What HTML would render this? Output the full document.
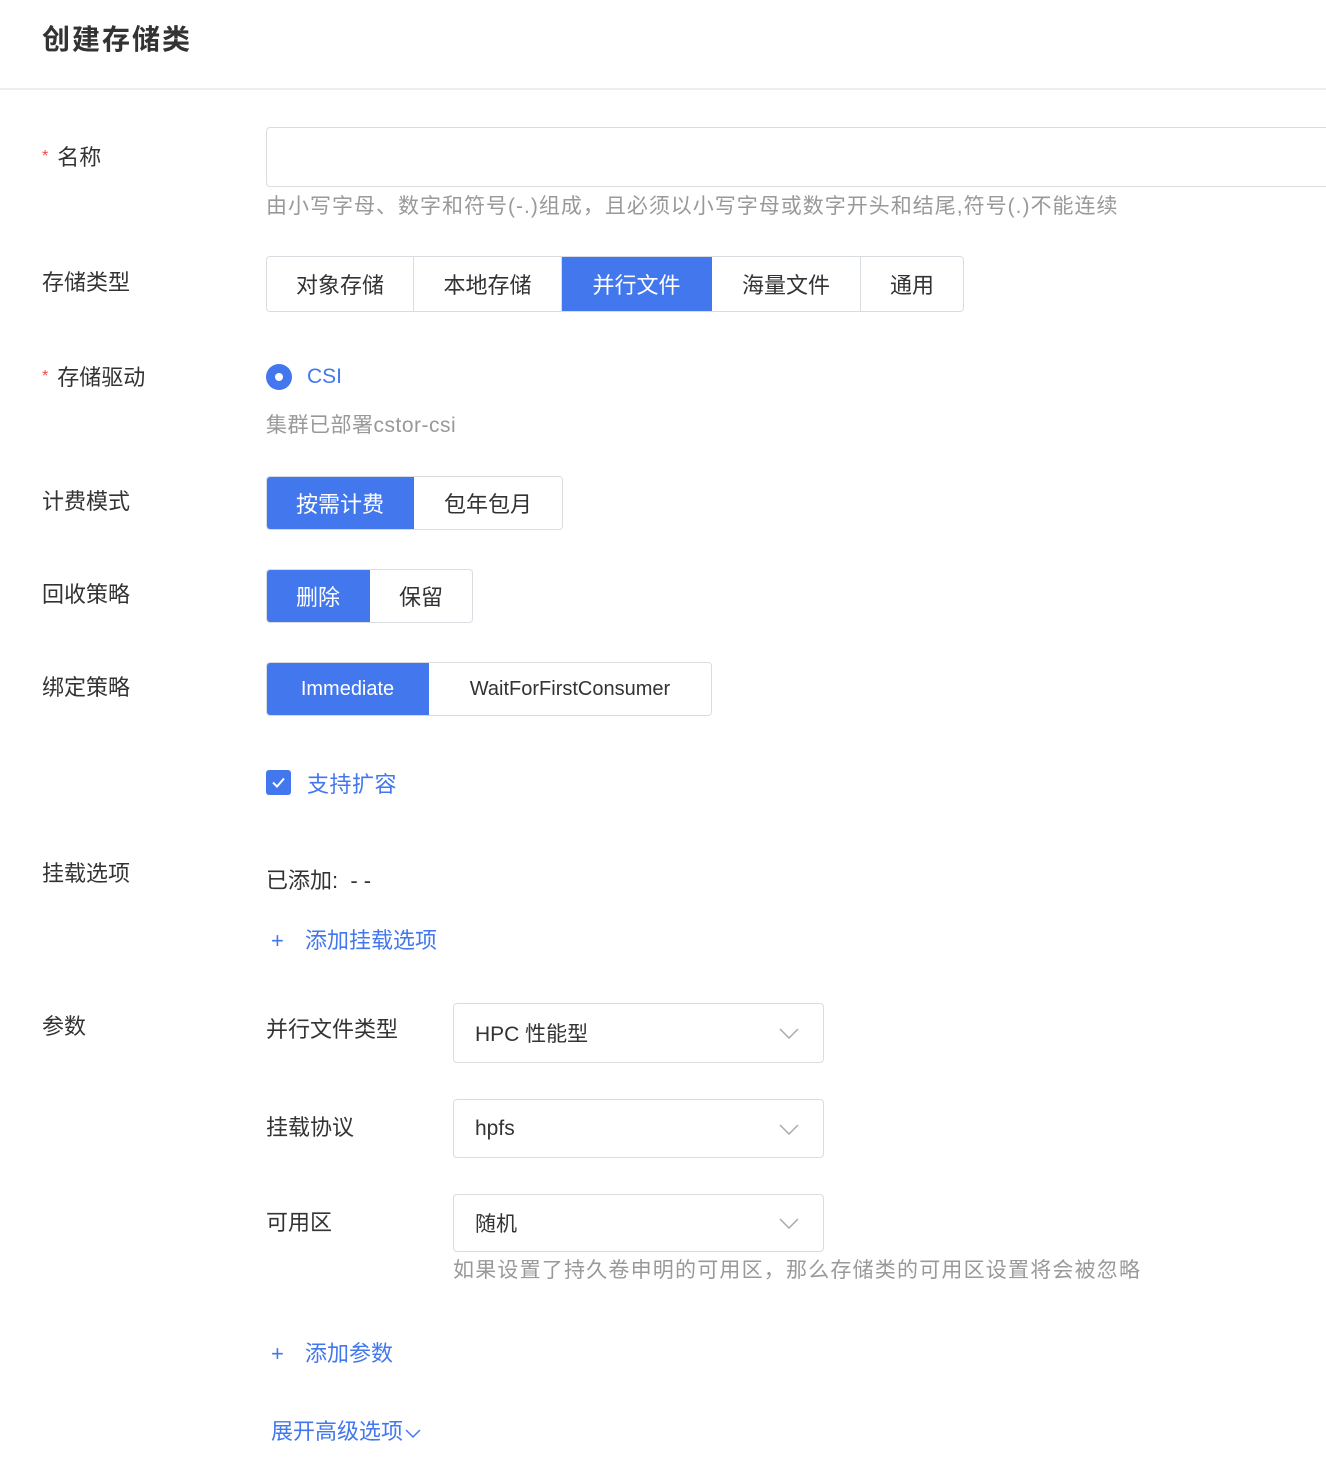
<!DOCTYPE html>
<html><head><meta charset="utf-8"><style>
*{box-sizing:border-box;margin:0;padding:0}
body{width:1326px;height:1480px;background:#fff;font-family:"Liberation Sans","Noto Sans CJK SC",sans-serif;color:#333;position:relative;overflow:hidden;font-size:22px}
.a{position:absolute;white-space:nowrap}
.lbl{left:42px;font-size:22px;color:#333;line-height:30px}
.req{color:#f04b4b;font-size:16px;margin-right:9px;vertical-align:4px}
.seg{position:absolute;display:flex;border:1px solid #d9dce1;border-radius:4px;overflow:hidden}
.seg div{display:flex;align-items:center;justify-content:center;border-right:1px solid #d9dce1;font-size:22px;color:#333;background:#fff}
.seg div:last-child{border-right:none}
.seg div.on{background:#4277ee;color:#fff;border-color:#4277ee}
.hint{color:#999;font-size:21px;letter-spacing:1px}
.blue{color:#4277ee}
.sel{position:absolute;left:453px;width:371px;border:1px solid #d9dce1;border-radius:4px;font-size:21px;color:#333;padding-left:21px;display:flex;align-items:center}
.sel svg{position:absolute;right:24px;top:50%;margin-top:-5px}
.plus{font-weight:300;display:inline-block;width:34px}
</style></head><body>
<div class="a" style="left:42px;top:18px;font-size:28px;font-weight:bold;color:#333;letter-spacing:2px">创建存储类</div>
<div class="a" style="left:0;top:88px;width:1326px;height:2px;background:#eceef2"></div>

<div class="a lbl" style="top:142px;left:42px"><span class="req">*</span>名称</div>
<div class="a" style="left:266px;top:127px;width:1080px;height:60px;border:1px solid #d9dce1;border-radius:4px"></div>
<div class="a hint" style="left:266px;top:190px">由小写字母、数字和符号(-.)组成，且必须以小写字母或数字开头和结尾,符号(.)不能连续</div>

<div class="a lbl" style="top:268px">存储类型</div>
<div class="seg" style="left:266px;top:256px;height:56px">
<div style="width:147px">对象存储</div><div style="width:148px">本地存储</div><div class="on" style="width:150px">并行文件</div><div style="width:149px">海量文件</div><div style="width:102px">通用</div></div>

<div class="a lbl" style="top:362px"><span class="req">*</span>存储驱动</div>
<div class="a" style="left:266px;top:364px;width:26px;height:26px;border-radius:50%;background:#4277ee"><div style="position:absolute;left:9px;top:9px;width:8px;height:8px;border-radius:50%;background:#fff"></div></div>
<div class="a blue" style="left:307px;top:365px;font-size:21px">CSI</div>
<div class="a hint" style="left:266px;top:409px;letter-spacing:0.5px">集群已部署cstor-csi</div>

<div class="a lbl" style="top:487px">计费模式</div>
<div class="seg" style="left:266px;top:476px;height:54px"><div class="on" style="width:147px">按需计费</div><div style="width:148px">包年包月</div></div>

<div class="a lbl" style="top:580px">回收策略</div>
<div class="seg" style="left:266px;top:569px;height:54px"><div class="on" style="width:103px">删除</div><div style="width:102px">保留</div></div>

<div class="a lbl" style="top:673px">绑定策略</div>
<div class="seg" style="left:266px;top:662px;height:54px"><div class="on" style="width:162px;font-size:20px">Immediate</div><div style="width:282px;font-size:20px">WaitForFirstConsumer</div></div>

<div class="a" style="left:266px;top:770px;width:25px;height:25px;border-radius:3px;background:#4277ee"><svg width="25" height="25" viewBox="0 0 25 25"><path d="M7 12.5l4 4 7-8" stroke="#fff" stroke-width="2" fill="none"/></svg></div>
<div class="a blue" style="left:307px;top:767px;letter-spacing:0.5px">支持扩容</div>

<div class="a lbl" style="top:859px">挂载选项</div>
<div class="a" style="left:266px;top:863px">已添加:&nbsp; - -</div>
<div class="a blue" style="left:271px;top:923px"><span class="plus">+</span>添加挂载选项</div>

<div class="a lbl" style="top:1012px">参数</div>
<div class="a" style="left:266px;top:1012px">并行文件类型</div>
<div class="sel" style="top:1003px;height:60px">HPC 性能型<svg width="20" height="11"><path d="M1 1l9 9 9-9" stroke="#aaa" stroke-width="1.5" fill="none"/></svg></div>
<div class="a" style="left:266px;top:1110px">挂载协议</div>
<div class="sel" style="top:1099px;height:59px">hpfs<svg width="20" height="11"><path d="M1 1l9 9 9-9" stroke="#aaa" stroke-width="1.5" fill="none"/></svg></div>
<div class="a" style="left:266px;top:1205px">可用区</div>
<div class="sel" style="top:1194px;height:58px">随机<svg width="20" height="11"><path d="M1 1l9 9 9-9" stroke="#aaa" stroke-width="1.5" fill="none"/></svg></div>
<div class="a hint" style="left:453px;top:1254px;letter-spacing:1.2px">如果设置了持久卷申明的可用区，那么存储类的可用区设置将会被忽略</div>

<div class="a blue" style="left:271px;top:1336px"><span class="plus">+</span>添加参数</div>
<div class="a blue" style="left:271px;top:1414px">展开高级选项<svg width="16" height="10" style="margin-left:2px"><path d="M1 1l7 7 7-7" stroke="#4277ee" stroke-width="1.5" fill="none"/></svg></div>
</body></html>
